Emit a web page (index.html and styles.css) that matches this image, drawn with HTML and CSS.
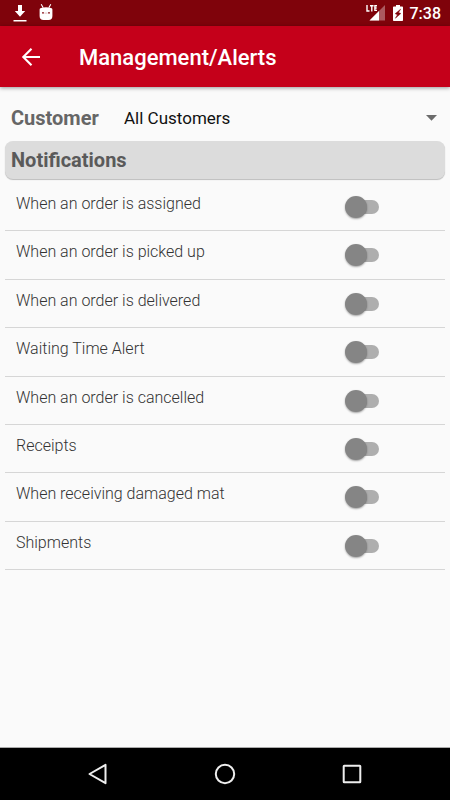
FILE: index.html
```html
<!DOCTYPE html>
<html lang="en">
<head>
<meta charset="utf-8">
<meta name="viewport" content="width=device-width, initial-scale=1">
<title>Management/Alerts</title>
<link rel="stylesheet" href="styles.css">
</head>
<body>
<div class="status-bar">
  <div class="status-group status-left">
    <svg width="14" height="18" viewBox="0 0 14 18" aria-hidden="true"><path d="M5 1h4v6h3.200L7 12.800 1.800 7H5zM.5 16h13v1.600H.5z" fill="#fff"/></svg>
    <svg width="14" height="18" viewBox="0 0 14 18" aria-hidden="true"><path d="M2.200.3l2 3.400M11.800.3L9.800 3.700" stroke="#fff" stroke-width="1.100"/><path d="M.6 5.500Q.6 4.300 2 4.100Q7 2.200 12 4.100Q13.400 4.300 13.400 5.500v6.500Q13.400 16 9.500 16h-5Q.6 16 .6 12z" fill="#fff"/><circle cx="4" cy="8.800" r=".9" fill="#7f030b"/><circle cx="10" cy="8.800" r=".9" fill="#7f030b"/><path d="M5.500 9.100h3" stroke="#d9b0b4" stroke-width=".8"/></svg>
  </div>
  <div class="status-group status-right">
    <svg width="20" height="18" viewBox="0 0 20 18" aria-hidden="true"><path d="M19 1v15.500H3.500z" fill="#fff" opacity=".35"/><path d="M0 0h11.500v8.500H0z" fill="#7f030b"/><path d="M13 7v9.500H3.500z" fill="#fff"/><path d="M1 1v6h2.500M4 1.700h3.600M5.800 1.700v5.900M11 1.700H8.900v4.700H11M8.900 4h1.800" fill="none" stroke="#fff" stroke-width="1.400"/></svg>
    <svg width="10" height="18" viewBox="0 0 10 18" aria-hidden="true"><path d="M3 1h4v1.500h2.200q.8 0 .8.800v13q0 .7-.8.700H.8q-.8 0-.8-.7v-13q0-.8.800-.8H3z" fill="#fff"/><path d="M7.600 5.200L2.200 9.700l2.300 1L2.400 14.200 7.800 9.500l-2.300-1z" fill="#7f030b" stroke="#7f030b" stroke-width=".5"/></svg>
    <time class="clock">7:38</time>
  </div>
</div>
<header class="app-bar">
  <button class="back" type="button" aria-label="Back">
    <svg width="20" height="20" viewBox="0 0 20 20" aria-hidden="true"><path d="M10.500 1.800L2.300 10l8.200 8.200M2.300 10H19" fill="none" stroke="#fff" stroke-width="2.100"/></svg>
  </button>
  <h1 class="title">Management/Alerts</h1>
</header>
<main class="content">
  <div class="customer">
    <label class="customer-label" for="customer">Customer</label>
    <div class="select-wrap">
      <select class="customer-select" id="customer"><option>All Customers</option></select>
      <svg class="caret" width="11" height="6" viewBox="0 0 11 6" aria-hidden="true"><path d="M0 0h11L5.500 5.800z" fill="#6b6b6b"/></svg>
    </div>
  </div>
  <h2 class="section-title">Notifications</h2>
  <ul class="alerts">
    <li class="alert"><label class="alert-label" for="a1">When an order is assigned</label><input class="switch" id="a1" type="checkbox" role="switch"></li>
    <li class="alert"><label class="alert-label" for="a2">When an order is picked up</label><input class="switch" id="a2" type="checkbox" role="switch"></li>
    <li class="alert"><label class="alert-label" for="a3">When an order is delivered</label><input class="switch" id="a3" type="checkbox" role="switch"></li>
    <li class="alert"><label class="alert-label" for="a4">Waiting Time Alert</label><input class="switch" id="a4" type="checkbox" role="switch"></li>
    <li class="alert"><label class="alert-label" for="a5">When an order is cancelled</label><input class="switch" id="a5" type="checkbox" role="switch"></li>
    <li class="alert"><label class="alert-label" for="a6">Receipts</label><input class="switch" id="a6" type="checkbox" role="switch"></li>
    <li class="alert"><label class="alert-label" for="a7">When receiving damaged mat</label><input class="switch" id="a7" type="checkbox" role="switch"></li>
    <li class="alert"><label class="alert-label" for="a8">Shipments</label><input class="switch" id="a8" type="checkbox" role="switch"></li>
  </ul>
</main>
<nav class="nav-bar" aria-label="System">
  <button class="nav-button" type="button" aria-label="Back"><svg width="22" height="22" viewBox="0 0 22 22" aria-hidden="true"><path d="M18.500 1.800v18.400L2.500 11z" fill="none" stroke="#eee" stroke-width="2" stroke-linejoin="round"/></svg></button>
  <button class="nav-button" type="button" aria-label="Home"><svg width="22" height="22" viewBox="0 0 22 22" aria-hidden="true"><circle cx="11" cy="11" r="9.200" fill="none" stroke="#eee" stroke-width="2"/></svg></button>
  <button class="nav-button" type="button" aria-label="Recent apps"><svg width="22" height="22" viewBox="0 0 22 22" aria-hidden="true"><rect x="2.700" y="2.700" width="16.600" height="16.600" rx=".5" fill="none" stroke="#eee" stroke-width="2"/></svg></button>
</nav>
</body>
</html>
```
FILE: styles.css
```css
* {
  box-sizing: border-box;
}

body {
  margin: 0;
  min-height: 100vh;
  display: flex;
  flex-direction: column;
  background: #fafafa;
  color: #333;
  font-family: Roboto, sans-serif;
  font-size: 16px;
}

svg {
  display: block;
}

button {
  display: flex;
  align-items: center;
  justify-content: center;
  padding: 0;
  border: 0;
  background: none;
}

.status-bar {
  display: flex;
  justify-content: space-between;
  height: 26px;
  padding: 0 9px 0 13px;
  background: #7f030b;
}

.status-group {
  display: flex;
  align-items: center;
}

.status-left {
  gap: 12px;
}

.status-right {
  gap: 7px;
}

.clock {
  color: #fff;
  font-size: 16px;
  font-weight: 500;
  line-height: 20px;
  padding-top: 2px;
}

.app-bar {
  display: flex;
  align-items: center;
  height: 61px;
  padding: 0 20px;
  gap: 37px;
  background: #c5001a;
  box-shadow: 0 1px 4px rgba(0, 0, 0, 0.4);
}

.back {
  width: 22px;
  height: 40px;
}

.title {
  margin: 0;
  padding-top: 3px;
  color: #fff;
  font-size: 22px;
  font-weight: 500;
  line-height: 30px;
}

.content {
  flex: 1;
  padding: 10px 5px;
}

.customer {
  display: flex;
  align-items: center;
  height: 44px;
  padding: 0 8px 2px 6px;
}

.customer-label {
  width: 113px;
  color: #666;
  font-size: 20px;
  font-weight: 700;
}

.select-wrap {
  flex: 1;
  display: grid;
  align-items: center;
}

.customer-select {
  grid-area: 1 / 1;
  width: 100%;
  height: 40px;
  padding: 0;
  border: 0;
  appearance: none;
  background: none;
  color: #111;
  font-family: inherit;
  font-size: 17px;
}

.caret {
  grid-area: 1 / 1;
  justify-self: end;
  pointer-events: none;
}

.section-title {
  margin: 0 0 4px;
  padding: 0 6px;
  border-radius: 8px;
  background: #dcdcdc;
  box-shadow: 0 1px 1px rgba(0, 0, 0, 0.25);
  color: #5a5a5a;
  font-size: 20px;
  font-weight: 700;
  line-height: 38px;
}

.alerts {
  display: grid;
  grid-auto-rows: 1fr;
  min-height: 387px;
  margin: 0;
  padding: 0;
  list-style: none;
}

.alert {
  display: flex;
  justify-content: space-between;
  align-items: flex-start;
  padding: 11px 15% 0 11px;
  border-bottom: 1px solid #d6d6d6;
}

.alert-label {
  font-weight: 300;
  line-height: 20px;
}

.switch {
  width: 34px;
  height: 22px;
  margin: 2px 0 0;
  appearance: none;
  display: flex;
  align-items: center;
}

.switch::before {
  content: "";
  width: 22px;
  height: 22px;
  border-radius: 50%;
  background: #858585;
  box-shadow: 0 1px 2px rgba(0, 0, 0, 0.35);
  z-index: 1;
}

.switch::after {
  content: "";
  width: 24px;
  height: 14px;
  margin-left: -12px;
  border-radius: 0 7px 7px 0;
  background: #aeaeae;
}

.switch:checked {
  flex-direction: row-reverse;
}

.switch:checked::before {
  background: #c5001a;
}

.switch:checked::after {
  margin: 0 -12px 0 0;
  border-radius: 7px 0 0 7px;
}

.nav-bar {
  display: grid;
  grid-template-columns: repeat(3, 127px);
  justify-content: center;
  height: 53px;
  border-top: 1px solid #aaa;
  background: #000;
}
```
